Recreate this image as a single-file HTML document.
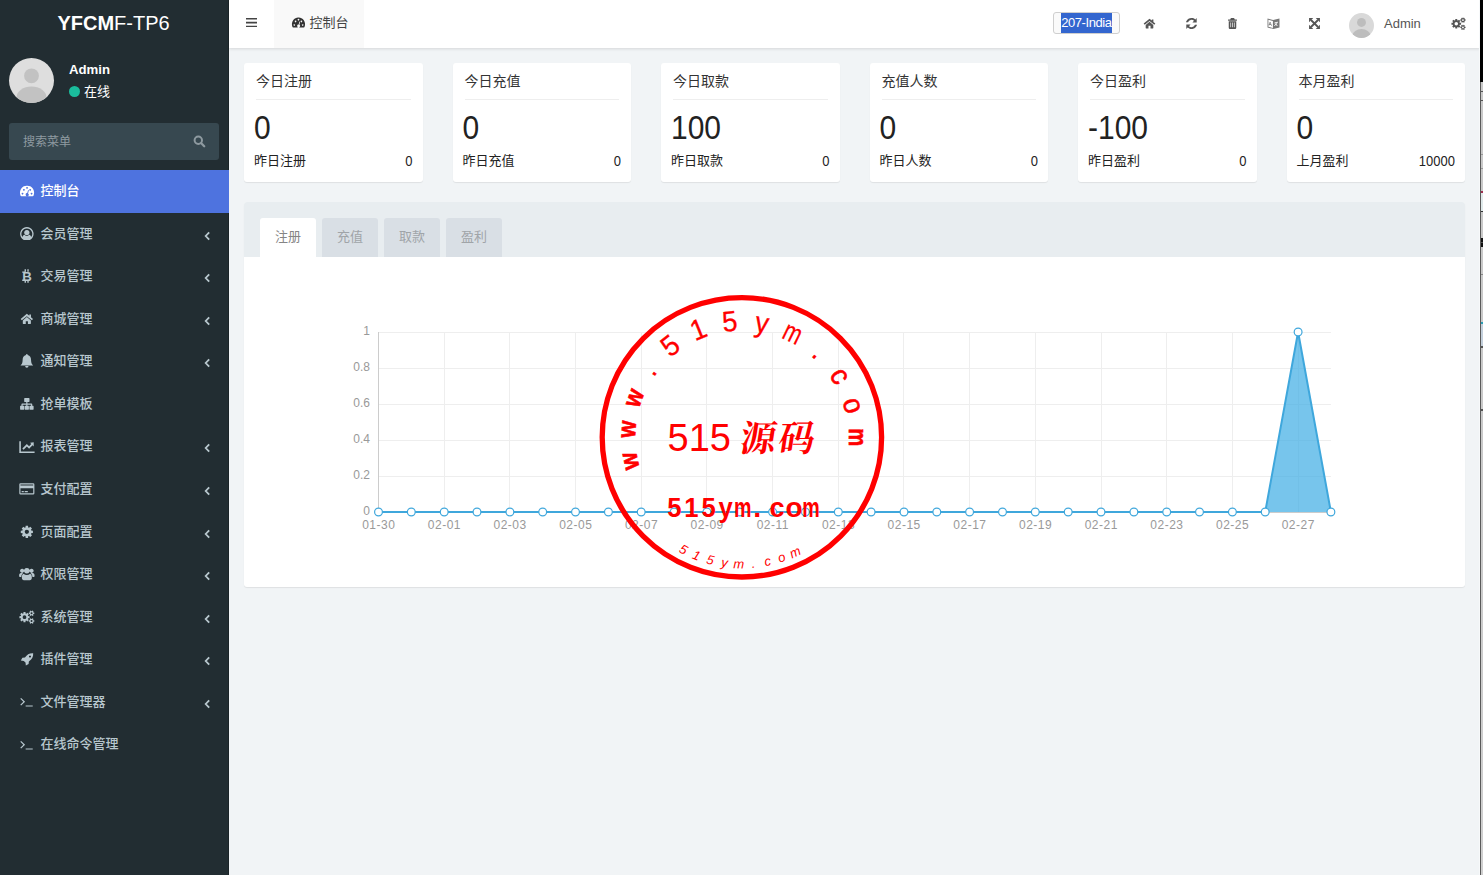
<!DOCTYPE html>
<html lang="zh-CN">
<head>
<meta charset="utf-8">
<title>YFCMF-TP6</title>
<style>
*{box-sizing:border-box;margin:0;padding:0}
html,body{width:1483px;height:875px;overflow:hidden;background:#f1f4f6}
body{position:relative;font-family:"Liberation Sans","Noto Sans CJK SC",sans-serif;font-size:14px;color:#333}
svg{display:block}
.abs{position:absolute}
/* sidebar */
#sidebar{position:absolute;left:0;top:0;width:229px;height:875px;background:#222d32;color:#b8c7ce;box-shadow:inset -1px 0 0 #1b2428}
#logo{position:absolute;left:-1px;top:0;width:229px;height:48px;line-height:46.500px;text-align:center;color:#fff;font-size:20px;letter-spacing:0}
#logo b{font-weight:bold}
#avatar{position:absolute;left:9px;top:58px;width:45px;height:45px;border-radius:50%;background:#dedede;overflow:hidden}
#uname{position:absolute;left:69px;top:60.500px;font-weight:bold;color:#fff;font-size:13.200px;line-height:18px}
#ustat{position:absolute;left:69px;top:82.500px;color:#fff;font-size:13px;line-height:18px}
#ustat i{display:inline-block;width:11px;height:11px;border-radius:50%;background:#1abc9c;margin-right:4px;vertical-align:-1px}
#search{position:absolute;left:9px;top:123px;width:210px;height:37px;border-radius:3px;background:#374850}
#search span{position:absolute;left:14px;top:1px;line-height:37px;font-size:12px;color:#8e9aa0}
#search svg{position:absolute;left:184px;top:12px}
ul.menu{position:absolute;left:0;top:170px;width:229px;list-style:none}
ul.menu li{position:absolute;left:0;width:229px;height:42.57px;line-height:41px;font-weight:500;font-size:13px;color:#b8c7ce}
ul.menu li.active{background:#4e73df;color:#fff}
ul.menu li span{position:absolute;left:40.600px;top:0;white-space:nowrap}
ul.menu li svg.ic{position:absolute;left:19.300px;top:14.100px}
ul.menu li svg.ar{position:absolute;left:204px;top:18px}
/* header */
#header{position:absolute;left:229px;top:0;width:1251px;height:48px;background:#fff;box-shadow:0 1px 3px rgba(0,0,0,.12)}
#tab{position:absolute;left:45px;top:0;width:90px;height:48px;background:#f9f9f9}
#tab span{position:absolute;left:35.500px;top:0;line-height:46px;font-size:13px;color:#444}
/* cards */
.card{position:absolute;top:63px;width:178.500px;height:119px;background:#fff;border-radius:3px;box-shadow:0 1px 1px rgba(0,0,0,.08)}
.card .t{position:absolute;left:12px;top:7.5px;font-size:14px;line-height:20px;color:#333}
.card .hr{position:absolute;left:12px;right:12px;top:36px;height:1px;background:#eee}
.card .n{position:absolute;left:10px;top:46px;font-size:30px;line-height:40px;color:#222;transform:scaleY(1.12);transform-origin:0 32px}
.card .l{position:absolute;left:10px;top:88.100px;font-size:13px;line-height:20px;color:#222}
.card .r{position:absolute;right:10px;top:88.500px;font-size:13px;line-height:20px;color:#222;transform:scaleY(1.12);transform-origin:100% 15px}
/* panel */
#panel{position:absolute;left:244px;top:202px;width:1221px;height:385px;background:#fff;border-radius:3px;box-shadow:0 1px 1px rgba(0,0,0,.08)}
#phead{position:absolute;left:0;top:0;width:1221px;height:55px;background:#e8edf0;border-radius:3px 3px 0 0}
.pt{position:absolute;top:16px;width:56px;height:39px;line-height:37px;text-align:center;font-size:13px;background:#d9dfe5;color:#a0a4a8;border-radius:3px 3px 0 0}
.pt.on{background:#fff;color:#858585}
#sel{position:absolute;left:824.300px;top:12px;width:67px;height:22px;border:1px solid #cfcfcf;border-radius:3px;background:#fafafa}
#sel span{position:absolute;left:6.300px;top:0;height:20px;line-height:20px;font-size:13px;background:#3366cf;color:#fff;white-space:nowrap;letter-spacing:-.45px;padding:0 .5px 0 .7px}
#havatar{position:absolute;left:1120px;top:13px;width:25px;height:25px;border-radius:50%;background:#d9d9d9;overflow:hidden}
#hname{position:absolute;left:1155px;top:0;line-height:47px;font-size:13px;color:#555}
#strip{position:absolute;left:1480px;top:0;width:3px;height:875px;border-left:1px solid #5a5a5a;background:linear-gradient(to bottom,#000 0,#000 82px,#c9c9c9 82px,#c9c9c9 91px,#555 91px,#555 92px,#c9c9c9 92px,#c9c9c9 100px,#555 100px,#555 101px,#c9c9c9 101px,#c9c9c9 154px,#999 154px,#999 155px,#c9c9c9 155px,#c9c9c9 168px,#999 168px,#999 169px,#c9c9c9 169px,#c9c9c9 191px,#a03050 191px,#a03050 193px,#dfe9ea 193px,#dfe9ea 211px,#333 211px,#333 212px,#c9c9c9 212px,#c9c9c9 238px,#111 238px,#111 242px,#999 242px,#111 243px,#111 247px,#c9c9c9 247px,#c9c9c9 274px,#888 274px,#888 275px,#c9c9c9 275px,#c9c9c9 322px,#2a9db5 322px,#2a9db5 324px,#c3cfdb 324px,#c3cfdb 346px,#555 346px,#555 348px,#c9c9c9 348px,#c9c9c9 409px,#555 409px,#555 411px,#c9c9c9 411px,#cfcfcf 100%)}
#strip:before{content:"";position:absolute;left:-1px;top:0;width:1px;height:82px;background:#000}
#stripw{position:absolute;left:1479px;top:0;width:1px;height:875px;background:#f7f9fa}
</style>
</head>
<body>
<div id="sidebar">
  <div id="logo"><b>YFCM</b>F-TP6</div>
  <div id="avatar"><svg width="45" height="45" viewBox="0 0 45 45"><circle cx="22.5" cy="17.800" r="7.400" fill="#c2c2c2"/><ellipse cx="22.5" cy="39.500" rx="15" ry="11" fill="#c2c2c2"/></svg></div>
  <div id="uname">Admin</div>
  <div id="ustat"><i></i>在线</div>
  <div id="search"><span>搜索菜单</span><svg width="13" height="13" viewBox="0 0 13 13"><circle cx="5.3" cy="5.300" r="3.700" fill="none" stroke="#8e9aa0" stroke-width="2"/><path d="M8.300 8.300l2.900 2.900" stroke="#8e9aa0" stroke-width="2.300" stroke-linecap="round"/></svg></div>
  <ul class="menu">
<li class="active" style="top:0.00px"><svg class="ic" style="" width="15.7" height="13.74" viewBox="0 0 16 14" fill="currentColor"><g transform="translate(8.200 7) scale(.94 1) translate(-8 -7)"><path fill-rule="evenodd" d="M.8 11.4A7.200 7.200 0 0 1 8 1.700a7.200 7.200 0 0 1 7.200 9.700q-.2 1.100-1.100 1.100H1.900q-.9 0-1.100-1.100zM3.100 8.900a.9.9 0 1 0 .01 0zM4.600 5a.9.9 0 1 0 .01 0zM8 3.100a.9.9 0 1 0 .01 0zM11.400 5a.9.9 0 1 0 .01 0zM12.900 8.900a.9.9 0 1 0 .01 0zM9.200 6l-1 3.300a1.600 1.600 0 1 0 .9.3l.9-3.300z"/></g></svg><span>控制台</span></li>
<li style="top:42.57px"><svg class="ic" style="" width="15.7" height="13.74" viewBox="0 0 16 14" fill="currentColor"><path fill-rule="evenodd" d="M8 .1a6.900 6.900 0 1 0 .01 0zM8 1.500a5.500 5.500 0 0 1 4.400 8.800c-.3-1.400-.9-2.400-2.100-2.500a3.100 3.100 0 0 1-4.600 0c-1.200.1-1.800 1.100-2.100 2.500A5.500 5.500 0 0 1 8 1.500zM8 3a2.700 2.700 0 1 0 .01 0z"/></svg><span>会员管理</span><svg class="ar" width="7" height="10" viewBox="0 0 7 10"><path d="M5.200 1.300L1.700 5l3.500 3.700" fill="none" stroke="currentColor" stroke-width="1.800"/></svg></li>
<li style="top:85.14px"><svg class="ic" style="" width="15.7" height="13.74" viewBox="0 0 16 14" fill="currentColor"><text x="8.300" y="12.200" text-anchor="middle" font-family="Liberation Sans,sans-serif" font-weight="bold" font-size="13.500">B</text><path d="M5.700 0.200h1.400v2.600h-1.400zM8.500 .2h1.400v2.600h-1.400zM5.700 11.600h1.400v2.400h-1.400zM8.500 11.600h1.400v2.400h-1.400zM3.300 2.500h3v1.400h-3zM3.300 10.800h3v1.400h-3z"/></svg><span>交易管理</span><svg class="ar" width="7" height="10" viewBox="0 0 7 10"><path d="M5.200 1.300L1.700 5l3.500 3.700" fill="none" stroke="currentColor" stroke-width="1.800"/></svg></li>
<li style="top:127.71px"><svg class="ic" style="" width="15.7" height="13.74" viewBox="0 0 16 14" fill="currentColor"><g transform="translate(8 7.400) scale(.84) translate(-8 -7.400)"><path d="M8 .7L.5 7l1.400 1.600L8 3.600l6.100 5L15.500 7l-2.500-2.100V1.700h-2v1.500zM8 4.800L3.100 8.800v3.900q0 .6.600.6h3V9.700h2.600v3.600h3q.6 0 .6-.6V8.800z"/></g></svg><span>商城管理</span><svg class="ar" width="7" height="10" viewBox="0 0 7 10"><path d="M5.200 1.300L1.700 5l3.500 3.700" fill="none" stroke="currentColor" stroke-width="1.800"/></svg></li>
<li style="top:170.28px"><svg class="ic" style="" width="15.7" height="13.74" viewBox="0 0 16 14" fill="currentColor"><g transform="translate(8 0) scale(.9 1) translate(-8 0)"><path d="M8 .1q.9 0 1 1c2.600.6 3.800 2.600 3.800 5.200 0 2.600.9 4.200 2.400 5.400H.8c1.500-1.200 2.400-2.800 2.400-5.400 0-2.600 1.200-4.600 3.800-5.200q.1-1 1-1zM6.100 12.300h3.800a1.900 1.700 0 0 1-3.800 0z"/></g></svg><span>通知管理</span><svg class="ar" width="7" height="10" viewBox="0 0 7 10"><path d="M5.200 1.300L1.700 5l3.500 3.700" fill="none" stroke="currentColor" stroke-width="1.800"/></svg></li>
<li style="top:212.85px"><svg class="ic" style="" width="15.7" height="13.74" viewBox="0 0 16 14" fill="currentColor"><path d="M5.800 1h4.400q.5 0 .5.500v3q0 .5-.5.500H8.600v1.600h4.100q.8 0 .8.800V9h.9q.5 0 .5.500v3q0 .5-.5.500h-3.300q-.5 0-.5-.5v-3q0-.5.500-.5h1.200V7.800H8.600V9h1q.5 0 .5.500v3q0 .5-.5.500H6.400q-.5 0-.5-.5v-3q0-.5.500-.5h1V7.800H3.700V9h1.200q.5 0 .5.500v3q0 .5-.5.500H1.600q-.5 0-.5-.5v-3q0-.5.500-.5h.9V7.400q0-.8.800-.8h4.100V5H5.800q-.5 0-.5-.5v-3q0-.5.500-.5z"/></svg><span>抢单模板</span></li>
<li style="top:255.42px"><svg class="ic" style="" width="15.7" height="13.74" viewBox="0 0 16 14" fill="currentColor"><path d="M.3 1.300h1.600v10.300h14v1.600H.3zM15 2.400v4.200l-1.200-1.200-3.500 3.500-2.300-2.300-3.300 3.300-1.300-1.300 4.600-4.600 2.300 2.300 2.200-2.200-1.200-1.200z"/></svg><span>报表管理</span><svg class="ar" width="7" height="10" viewBox="0 0 7 10"><path d="M5.200 1.300L1.700 5l3.500 3.700" fill="none" stroke="currentColor" stroke-width="1.800"/></svg></li>
<li style="top:297.99px"><svg class="ic" style="" width="15.7" height="13.74" viewBox="0 0 16 14" fill="currentColor"><path fill-rule="evenodd" d="M1.600 1.300h12.800q1.300 0 1.300 1.300v8.800q0 1.300-1.300 1.300H1.600Q.3 12.700.3 11.400V2.600q0-1.300 1.300-1.300zM1.500 2.500v1h13v-1zM1.500 6.300v5.200h13V6.300zM2.700 9.300h2.200v1.100H2.700zM5.800 9.300h3.200v1.100H5.800z"/></svg><span>支付配置</span><svg class="ar" width="7" height="10" viewBox="0 0 7 10"><path d="M5.200 1.300L1.700 5l3.500 3.700" fill="none" stroke="currentColor" stroke-width="1.800"/></svg></li>
<li style="top:340.56px"><svg class="ic" style="" width="15.7" height="13.74" viewBox="0 0 16 14" fill="currentColor"><path fill-rule="evenodd" d="M14.18 5.77 L14.18 8.23 L12.50 8.35 L12.14 9.23 L13.24 10.50 L11.50 12.24 L10.23 11.14 L9.35 11.50 L9.23 13.18 L6.77 13.18 L6.65 11.50 L5.77 11.14 L4.50 12.24 L2.76 10.50 L3.86 9.23 L3.50 8.35 L1.82 8.23 L1.82 5.77 L3.50 5.65 L3.86 4.77 L2.76 3.50 L4.50 1.76 L5.77 2.86 L6.65 2.50 L6.77 0.82 L9.23 0.82 L9.35 2.50 L10.23 2.86 L11.50 1.76 L13.24 3.50 L12.14 4.77 L12.50 5.65Z M5.80 7.00 a2.20 2.20 0 1 0 4.40 0 a2.20 2.20 0 1 0 -4.40 0Z"/></svg><span>页面配置</span><svg class="ar" width="7" height="10" viewBox="0 0 7 10"><path d="M5.200 1.300L1.700 5l3.500 3.700" fill="none" stroke="currentColor" stroke-width="1.800"/></svg></li>
<li style="top:383.13px"><svg class="ic" style="" width="15.7" height="13.74" viewBox="0 0 16 14" fill="currentColor"><path d="M8 .9a2.900 2.900 0 1 0 .01 0zM3.200 1.800a2.100 2.100 0 1 0 .01 0zM12.800 1.800a2.100 2.100 0 1 0 .01 0zM4.700 6.900C3.500 7.200 2.900 8.500 2.900 10.600c0 1.800.8 2.800 2.100 2.800h6c1.300 0 2.100-1 2.100-2.800 0-2.100-.6-3.400-1.800-3.700a4.700 4.700 0 0 1-6.600 0zM4.100 6.300C3.500 6.200 2.800 6.100 2.100 6.100.8 6.100.1 7.100.1 8.800c0 1 .5 1.500 1.400 1.500h.8c0-1.700.6-3.200 1.800-4zM11.900 6.300c.6-.1 1.300-.2 2-.2 1.300 0 2 1 2 2.700 0 1-.5 1.500-1.400 1.500h-.8c0-1.700-.6-3.200-1.800-4z"/></svg><span>权限管理</span><svg class="ar" width="7" height="10" viewBox="0 0 7 10"><path d="M5.200 1.300L1.700 5l3.500 3.700" fill="none" stroke="currentColor" stroke-width="1.800"/></svg></li>
<li style="top:425.70px"><svg class="ic" style="" width="15.7" height="13.74" viewBox="0 0 16 14" fill="currentColor"><path fill-rule="evenodd" d="M10.80 6.27 L10.80 8.33 L9.34 8.42 L9.03 9.15 L10.01 10.24 L8.54 11.71 L7.45 10.73 L6.72 11.04 L6.63 12.50 L4.57 12.50 L4.48 11.04 L3.75 10.73 L2.66 11.71 L1.19 10.24 L2.17 9.15 L1.86 8.42 L0.40 8.33 L0.40 6.27 L1.86 6.18 L2.17 5.45 L1.19 4.36 L2.66 2.89 L3.75 3.87 L4.48 3.56 L4.57 2.10 L6.63 2.10 L6.72 3.56 L7.45 3.87 L8.54 2.89 L10.01 4.36 L9.03 5.45 L9.34 6.18Z M3.70 7.30 a1.90 1.90 0 1 0 3.80 0 a1.90 1.90 0 1 0 -3.80 0Z M15.60 2.55 L15.60 4.05 L14.65 4.06 L14.38 4.53 L14.85 5.35 L13.55 6.10 L13.07 5.28 L12.53 5.28 L12.05 6.10 L10.75 5.35 L11.22 4.53 L10.95 4.06 L10.00 4.05 L10.00 2.55 L10.95 2.54 L11.22 2.07 L10.75 1.25 L12.05 0.50 L12.53 1.32 L13.07 1.32 L13.55 0.50 L14.85 1.25 L14.38 2.07 L14.65 2.54Z M11.80 3.30 a1.00 1.00 0 1 0 2.00 0 a1.00 1.00 0 1 0 -2.00 0Z M15.60 10.45 L15.60 11.95 L14.65 11.96 L14.38 12.43 L14.85 13.25 L13.55 14.00 L13.07 13.18 L12.53 13.18 L12.05 14.00 L10.75 13.25 L11.22 12.43 L10.95 11.96 L10.00 11.95 L10.00 10.45 L10.95 10.44 L11.22 9.97 L10.75 9.15 L12.05 8.40 L12.53 9.22 L13.07 9.22 L13.55 8.40 L14.85 9.15 L14.38 9.97 L14.65 10.44Z M11.80 11.20 a1.00 1.00 0 1 0 2.00 0 a1.00 1.00 0 1 0 -2.00 0Z"/></svg><span>系统管理</span><svg class="ar" width="7" height="10" viewBox="0 0 7 10"><path d="M5.200 1.300L1.700 5l3.500 3.700" fill="none" stroke="currentColor" stroke-width="1.800"/></svg></li>
<li style="top:468.27px"><svg class="ic" style="" width="15.7" height="13.74" viewBox="0 0 16 14" fill="currentColor"><g transform="translate(8.300 7.200) scale(.88) translate(-8 -7.500)"><path fill-rule="evenodd" d="M15 .8c.3 4.200-1.500 7-5 9.400l-.3 3-3.200 1.800-.4-3.400-2-2L.7 9.200 2.500 6l3-.3C7.900 2.200 10.800.5 15 .8zM11.300 3.300a1.200 1.200 0 1 0 .01 0z"/></g></svg><span>插件管理</span><svg class="ar" width="7" height="10" viewBox="0 0 7 10"><path d="M5.200 1.300L1.700 5l3.500 3.700" fill="none" stroke="currentColor" stroke-width="1.800"/></svg></li>
<li style="top:510.84px"><svg class="ic" style="" width="15.7" height="13.74" viewBox="0 0 16 14" fill="currentColor"><path d="M2.200 3l4 3.900-4 3.900-.9-.9 3.100-3L1.300 3.900zM6.800 10.600h7.200v1.100H6.800z"/></svg><span>文件管理器</span><svg class="ar" width="7" height="10" viewBox="0 0 7 10"><path d="M5.200 1.300L1.700 5l3.500 3.700" fill="none" stroke="currentColor" stroke-width="1.800"/></svg></li>
<li style="top:553.41px"><svg class="ic" style="" width="15.7" height="13.74" viewBox="0 0 16 14" fill="currentColor"><path d="M2.200 3l4 3.900-4 3.900-.9-.9 3.100-3L1.300 3.900zM6.800 10.600h7.200v1.100H6.800z"/></svg><span>在线命令管理</span></li>
</ul>
</div>
<div id="header">
  <svg class="abs" style="left:17px;top:17.700px" width="11" height="9.300" viewBox="0 0 11 9.300"><path d="M0 0h11v1.600H0zM0 3.850h11v1.600H0zM0 7.700h11v1.600H0z" fill="#444"/></svg>
  <div id="tab"><svg class="abs" style="left:16.500px;top:16.300px;color:#333" width="14.6" height="12.8" viewBox="0 0 16 14" fill="currentColor"><g transform="translate(8.200 7) scale(.94 1) translate(-8 -7)"><path fill-rule="evenodd" d="M.8 11.4A7.200 7.200 0 0 1 8 1.700a7.200 7.200 0 0 1 7.200 9.700q-.2 1.100-1.100 1.100H1.900q-.9 0-1.100-1.100zM3.100 8.900a.9.9 0 1 0 .01 0zM4.600 5a.9.9 0 1 0 .01 0zM8 3.100a.9.9 0 1 0 .01 0zM11.400 5a.9.9 0 1 0 .01 0zM12.900 8.900a.9.9 0 1 0 .01 0zM9.200 6l-1 3.300a1.600 1.600 0 1 0 .9.3l.9-3.300z"/></g></svg><span>控制台</span></div>
  <div id="sel"><span>207-India</span></div>
  <svg class="abs" style="left:912.5px;top:17px;color:#555" width="15" height="13" viewBox="0 0 16 14" fill="currentColor"><g transform="translate(8 7.400) scale(.84) translate(-8 -7.400)"><path d="M8 .7L.5 7l1.400 1.600L8 3.600l6.100 5L15.500 7l-2.500-2.100V1.700h-2v1.500zM8 4.800L3.100 8.800v3.900q0 .6.600.6h3V9.700h2.600v3.600h3q.6 0 .6-.6V8.800z"/></g></svg><svg class="abs" style="left:954.5px;top:17px;color:#555" width="15" height="13" viewBox="0 0 16 14" fill="currentColor"><path d="M13.600 1.200v4.600H9l1.700-1.700A3.900 3.900 0 0 0 4.300 5.600H2A6.100 6.100 0 0 1 12.100 2.700zM2.400 12.800V8.200H7L5.300 9.900a3.900 3.900 0 0 0 6.400-1.500H14A6.100 6.100 0 0 1 3.900 11.300z"/></svg><svg class="abs" style="left:995.5px;top:17px;color:#555" width="15" height="13" viewBox="0 0 16 14" fill="currentColor"><g transform="translate(8 7) scale(.9) translate(-8 -7)"><path fill-rule="evenodd" d="M5.600 1.300q.3-.8 1-.8h2.800q.7 0 1 .8l.3.900h2.600v1.400H2.700V2.200h2.600zM3.500 4.200h9v8q0 1.400-1.300 1.400H4.800q-1.300 0-1.300-1.400zM5.500 5.800v5.800h.8V5.800zM7.600 5.800v5.800h.8V5.800zM9.700 5.800v5.800h.8V5.800z"/></g></svg><svg class="abs" style="left:1036.5px;top:17px;color:#555" width="15" height="13" viewBox="0 0 16 14" fill="currentColor"><g transform="translate(8 7) scale(.92) translate(-8 -7)" opacity=".8"><path fill-rule="evenodd" d="M1 1.200l6.500 1.600 7.500-1.600v10.600L8 13.500 1 11.600zM2 2.600v8.200l5.300 1.400V4zM3.600 5.200l.9-.1 1.700 4.700-.9-.2-.3-.9-1.700-.3-.3.800-.8-.2zM4 6.100l-.5 1.500 1.100.2zM9.300 5.500l3.900-.5v.8l-.5.100c-.2.900-.6 1.600-1.200 2.200l1.300 1-.5.700-1.500-1.100c-.6.500-1.300.8-2 1l-.3-.8c.6-.1 1.200-.4 1.700-.8-.5-.5-.8-1-1-1.600l.8-.2c.2.500.4.900.8 1.200.5-.5.800-1 .9-1.500l-2.400.3z"/></g></svg><svg class="abs" style="left:1077.5px;top:17px;color:#555" width="15" height="13" viewBox="0 0 16 14" fill="currentColor"><g transform="translate(8 7) scale(.9) translate(-8 -7)"><path d="M1.500 .5h5L1.500 5.500zM14.500 .5v5L9.500 .5zM14.500 13.500h-5l5-5zM1.500 13.500v-5l5 5z"/><path d="M3.800 2.800l8.400 8.400M12.200 2.800L3.800 11.200" stroke="currentColor" stroke-width="2.200" fill="none"/></g></svg><svg class="abs" style="left:1221.5px;top:17px;color:#555" width="15" height="13" viewBox="0 0 16 14" fill="currentColor"><path fill-rule="evenodd" d="M10.80 6.27 L10.80 8.33 L9.34 8.42 L9.03 9.15 L10.01 10.24 L8.54 11.71 L7.45 10.73 L6.72 11.04 L6.63 12.50 L4.57 12.50 L4.48 11.04 L3.75 10.73 L2.66 11.71 L1.19 10.24 L2.17 9.15 L1.86 8.42 L0.40 8.33 L0.40 6.27 L1.86 6.18 L2.17 5.45 L1.19 4.36 L2.66 2.89 L3.75 3.87 L4.48 3.56 L4.57 2.10 L6.63 2.10 L6.72 3.56 L7.45 3.87 L8.54 2.89 L10.01 4.36 L9.03 5.45 L9.34 6.18Z M3.70 7.30 a1.90 1.90 0 1 0 3.80 0 a1.90 1.90 0 1 0 -3.80 0Z M15.60 2.55 L15.60 4.05 L14.65 4.06 L14.38 4.53 L14.85 5.35 L13.55 6.10 L13.07 5.28 L12.53 5.28 L12.05 6.10 L10.75 5.35 L11.22 4.53 L10.95 4.06 L10.00 4.05 L10.00 2.55 L10.95 2.54 L11.22 2.07 L10.75 1.25 L12.05 0.50 L12.53 1.32 L13.07 1.32 L13.55 0.50 L14.85 1.25 L14.38 2.07 L14.65 2.54Z M11.80 3.30 a1.00 1.00 0 1 0 2.00 0 a1.00 1.00 0 1 0 -2.00 0Z M15.60 10.45 L15.60 11.95 L14.65 11.96 L14.38 12.43 L14.85 13.25 L13.55 14.00 L13.07 13.18 L12.53 13.18 L12.05 14.00 L10.75 13.25 L11.22 12.43 L10.95 11.96 L10.00 11.95 L10.00 10.45 L10.95 10.44 L11.22 9.97 L10.75 9.15 L12.05 8.40 L12.53 9.22 L13.07 9.22 L13.55 8.40 L14.85 9.15 L14.38 9.97 L14.65 10.44Z M11.80 11.20 a1.00 1.00 0 1 0 2.00 0 a1.00 1.00 0 1 0 -2.00 0Z"/></svg>
  <div id="havatar"><svg width="25" height="25" viewBox="0 0 45 45"><circle cx="22.5" cy="17" r="8" fill="#bdbdbd"/><ellipse cx="22.5" cy="40" rx="16" ry="11" fill="#bdbdbd"/></svg></div>
  <div id="hname">Admin</div>
</div>
<div class="card" style="left:244.0px"><div class="t">今日注册</div><div class="hr"></div><div class="n">0</div><div class="l">昨日注册</div><div class="r">0</div></div>
<div class="card" style="left:452.5px"><div class="t">今日充值</div><div class="hr"></div><div class="n">0</div><div class="l">昨日充值</div><div class="r">0</div></div>
<div class="card" style="left:661.0px"><div class="t">今日取款</div><div class="hr"></div><div class="n">100</div><div class="l">昨日取款</div><div class="r">0</div></div>
<div class="card" style="left:869.5px"><div class="t">充值人数</div><div class="hr"></div><div class="n">0</div><div class="l">昨日人数</div><div class="r">0</div></div>
<div class="card" style="left:1078.0px"><div class="t">今日盈利</div><div class="hr"></div><div class="n">-100</div><div class="l">昨日盈利</div><div class="r">0</div></div>
<div class="card" style="left:1286.5px"><div class="t">本月盈利</div><div class="hr"></div><div class="n">0</div><div class="l">上月盈利</div><div class="r">10000</div></div>

<div id="panel">
  <div id="phead">
    <div class="pt on" style="left:16px">注册</div>
    <div class="pt" style="left:78px">充值</div>
    <div class="pt" style="left:140px">取款</div>
    <div class="pt" style="left:202px">盈利</div>
  </div>
</div>
<svg id="chart" class="abs" style="left:0;top:0" width="1483" height="875" viewBox="0 0 1483 875">
<line x1="378.5" y1="476.5" x2="1330.9" y2="476.5" stroke="#eeeeee" stroke-width="1"/><line x1="378.5" y1="440.5" x2="1330.9" y2="440.5" stroke="#eeeeee" stroke-width="1"/><line x1="378.5" y1="404.5" x2="1330.9" y2="404.5" stroke="#eeeeee" stroke-width="1"/><line x1="378.5" y1="368.5" x2="1330.9" y2="368.5" stroke="#eeeeee" stroke-width="1"/><line x1="378.5" y1="332.5" x2="1330.9" y2="332.5" stroke="#eeeeee" stroke-width="1"/><line x1="444.5" y1="332.0" x2="444.5" y2="512.0" stroke="#eeeeee" stroke-width="1"/><line x1="509.5" y1="332.0" x2="509.5" y2="512.0" stroke="#eeeeee" stroke-width="1"/><line x1="575.5" y1="332.0" x2="575.5" y2="512.0" stroke="#eeeeee" stroke-width="1"/><line x1="641.5" y1="332.0" x2="641.5" y2="512.0" stroke="#eeeeee" stroke-width="1"/><line x1="706.5" y1="332.0" x2="706.5" y2="512.0" stroke="#eeeeee" stroke-width="1"/><line x1="772.5" y1="332.0" x2="772.5" y2="512.0" stroke="#eeeeee" stroke-width="1"/><line x1="838.5" y1="332.0" x2="838.5" y2="512.0" stroke="#eeeeee" stroke-width="1"/><line x1="903.5" y1="332.0" x2="903.5" y2="512.0" stroke="#eeeeee" stroke-width="1"/><line x1="969.5" y1="332.0" x2="969.5" y2="512.0" stroke="#eeeeee" stroke-width="1"/><line x1="1035.5" y1="332.0" x2="1035.5" y2="512.0" stroke="#eeeeee" stroke-width="1"/><line x1="1101.5" y1="332.0" x2="1101.5" y2="512.0" stroke="#eeeeee" stroke-width="1"/><line x1="1166.5" y1="332.0" x2="1166.5" y2="512.0" stroke="#eeeeee" stroke-width="1"/><line x1="1232.5" y1="332.0" x2="1232.5" y2="512.0" stroke="#eeeeee" stroke-width="1"/><line x1="1298.5" y1="332.0" x2="1298.5" y2="512.0" stroke="#eeeeee" stroke-width="1"/><line x1="378.5" y1="332.0" x2="378.5" y2="512.5" stroke="#cccccc" stroke-width="1"/><line x1="378.5" y1="512.5" x2="1330.9" y2="512.5" stroke="#cccccc" stroke-width="1"/><text x="370.0" y="515.2" text-anchor="end" font-size="12" fill="#999">0</text><text x="370.0" y="479.2" text-anchor="end" font-size="12" fill="#999">0.2</text><text x="370.0" y="443.2" text-anchor="end" font-size="12" fill="#999">0.4</text><text x="370.0" y="407.2" text-anchor="end" font-size="12" fill="#999">0.6</text><text x="370.0" y="371.2" text-anchor="end" font-size="12" fill="#999">0.8</text><text x="370.0" y="335.2" text-anchor="end" font-size="12" fill="#999">1</text><text x="378.8" y="529.0" text-anchor="middle" font-size="12" letter-spacing=".5" fill="#999">01-30</text><text x="444.4" y="529.0" text-anchor="middle" font-size="12" letter-spacing=".5" fill="#999">02-01</text><text x="510.1" y="529.0" text-anchor="middle" font-size="12" letter-spacing=".5" fill="#999">02-03</text><text x="575.8" y="529.0" text-anchor="middle" font-size="12" letter-spacing=".5" fill="#999">02-05</text><text x="641.5" y="529.0" text-anchor="middle" font-size="12" letter-spacing=".5" fill="#999">02-07</text><text x="707.2" y="529.0" text-anchor="middle" font-size="12" letter-spacing=".5" fill="#999">02-09</text><text x="772.8" y="529.0" text-anchor="middle" font-size="12" letter-spacing=".5" fill="#999">02-11</text><text x="838.5" y="529.0" text-anchor="middle" font-size="12" letter-spacing=".5" fill="#999">02-13</text><text x="904.2" y="529.0" text-anchor="middle" font-size="12" letter-spacing=".5" fill="#999">02-15</text><text x="969.9" y="529.0" text-anchor="middle" font-size="12" letter-spacing=".5" fill="#999">02-17</text><text x="1035.6" y="529.0" text-anchor="middle" font-size="12" letter-spacing=".5" fill="#999">02-19</text><text x="1101.3" y="529.0" text-anchor="middle" font-size="12" letter-spacing=".5" fill="#999">02-21</text><text x="1166.9" y="529.0" text-anchor="middle" font-size="12" letter-spacing=".5" fill="#999">02-23</text><text x="1232.6" y="529.0" text-anchor="middle" font-size="12" letter-spacing=".5" fill="#999">02-25</text><text x="1298.3" y="529.0" text-anchor="middle" font-size="12" letter-spacing=".5" fill="#999">02-27</text>
<polygon points="378.5,512.0 411.3,512.0 444.2,512.0 477.0,512.0 509.9,512.0 542.7,512.0 575.5,512.0 608.4,512.0 641.2,512.0 674.1,512.0 706.9,512.0 739.8,512.0 772.6,512.0 805.4,512.0 838.3,512.0 871.1,512.0 904.0,512.0 936.8,512.0 969.6,512.0 1002.5,512.0 1035.3,512.0 1068.2,512.0 1101.0,512.0 1133.9,512.0 1166.7,512.0 1199.5,512.0 1232.4,512.0 1265.2,512.0 1298.1,332.0 1330.9,512.0 1330.9,512.0 378.5,512.0" fill="#3dade4" fill-opacity="0.7"/><polyline points="378.5,512.0 411.3,512.0 444.2,512.0 477.0,512.0 509.9,512.0 542.7,512.0 575.5,512.0 608.4,512.0 641.2,512.0 674.1,512.0 706.9,512.0 739.8,512.0 772.6,512.0 805.4,512.0 838.3,512.0 871.1,512.0 904.0,512.0 936.8,512.0 969.6,512.0 1002.5,512.0 1035.3,512.0 1068.2,512.0 1101.0,512.0 1133.9,512.0 1166.7,512.0 1199.5,512.0 1232.4,512.0 1265.2,512.0 1298.1,332.0 1330.9,512.0" fill="none" stroke="#3fa7dc" stroke-width="2" stroke-linejoin="round"/><circle cx="378.5" cy="512.0" r="3.900" fill="#fff" stroke="#3fa7dc" stroke-width="1.200"/><circle cx="411.3" cy="512.0" r="3.900" fill="#fff" stroke="#3fa7dc" stroke-width="1.200"/><circle cx="444.2" cy="512.0" r="3.900" fill="#fff" stroke="#3fa7dc" stroke-width="1.200"/><circle cx="477.0" cy="512.0" r="3.900" fill="#fff" stroke="#3fa7dc" stroke-width="1.200"/><circle cx="509.9" cy="512.0" r="3.900" fill="#fff" stroke="#3fa7dc" stroke-width="1.200"/><circle cx="542.7" cy="512.0" r="3.900" fill="#fff" stroke="#3fa7dc" stroke-width="1.200"/><circle cx="575.5" cy="512.0" r="3.900" fill="#fff" stroke="#3fa7dc" stroke-width="1.200"/><circle cx="608.4" cy="512.0" r="3.900" fill="#fff" stroke="#3fa7dc" stroke-width="1.200"/><circle cx="641.2" cy="512.0" r="3.900" fill="#fff" stroke="#3fa7dc" stroke-width="1.200"/><circle cx="674.1" cy="512.0" r="3.900" fill="#fff" stroke="#3fa7dc" stroke-width="1.200"/><circle cx="706.9" cy="512.0" r="3.900" fill="#fff" stroke="#3fa7dc" stroke-width="1.200"/><circle cx="739.8" cy="512.0" r="3.900" fill="#fff" stroke="#3fa7dc" stroke-width="1.200"/><circle cx="772.6" cy="512.0" r="3.900" fill="#fff" stroke="#3fa7dc" stroke-width="1.200"/><circle cx="805.4" cy="512.0" r="3.900" fill="#fff" stroke="#3fa7dc" stroke-width="1.200"/><circle cx="838.3" cy="512.0" r="3.900" fill="#fff" stroke="#3fa7dc" stroke-width="1.200"/><circle cx="871.1" cy="512.0" r="3.900" fill="#fff" stroke="#3fa7dc" stroke-width="1.200"/><circle cx="904.0" cy="512.0" r="3.900" fill="#fff" stroke="#3fa7dc" stroke-width="1.200"/><circle cx="936.8" cy="512.0" r="3.900" fill="#fff" stroke="#3fa7dc" stroke-width="1.200"/><circle cx="969.6" cy="512.0" r="3.900" fill="#fff" stroke="#3fa7dc" stroke-width="1.200"/><circle cx="1002.5" cy="512.0" r="3.900" fill="#fff" stroke="#3fa7dc" stroke-width="1.200"/><circle cx="1035.3" cy="512.0" r="3.900" fill="#fff" stroke="#3fa7dc" stroke-width="1.200"/><circle cx="1068.2" cy="512.0" r="3.900" fill="#fff" stroke="#3fa7dc" stroke-width="1.200"/><circle cx="1101.0" cy="512.0" r="3.900" fill="#fff" stroke="#3fa7dc" stroke-width="1.200"/><circle cx="1133.9" cy="512.0" r="3.900" fill="#fff" stroke="#3fa7dc" stroke-width="1.200"/><circle cx="1166.7" cy="512.0" r="3.900" fill="#fff" stroke="#3fa7dc" stroke-width="1.200"/><circle cx="1199.5" cy="512.0" r="3.900" fill="#fff" stroke="#3fa7dc" stroke-width="1.200"/><circle cx="1232.4" cy="512.0" r="3.900" fill="#fff" stroke="#3fa7dc" stroke-width="1.200"/><circle cx="1265.2" cy="512.0" r="3.900" fill="#fff" stroke="#3fa7dc" stroke-width="1.200"/><circle cx="1298.1" cy="332.0" r="3.900" fill="#fff" stroke="#3fa7dc" stroke-width="1.200"/><circle cx="1330.9" cy="512.0" r="3.900" fill="#fff" stroke="#3fa7dc" stroke-width="1.200"/>
</svg>
<svg id="stamp" class="abs" style="left:0;top:0" width="1483" height="875" viewBox="0 0 1483 875" fill="#ff0000" font-family="Liberation Sans,sans-serif">
<circle cx="741.9" cy="437.3" r="139.7" fill="none" stroke="#ff0000" stroke-width="5.300"/><text transform="translate(741.9 437.3) rotate(-102.0) translate(0 -106.6) scale(0.76 0.90)" text-anchor="middle" font-size="28.800" font-weight="bold" stroke="#ff0000" stroke-width=".7">w</text><text transform="translate(741.9 437.3) rotate(-86.0) translate(0 -106.6) scale(0.76 0.90)" text-anchor="middle" font-size="28.800" font-weight="bold" stroke="#ff0000" stroke-width=".7">w</text><text transform="translate(741.9 437.3) rotate(-70.0) translate(0 -106.6) scale(0.76 0.90)" text-anchor="middle" font-size="28.800" font-weight="bold" stroke="#ff0000" stroke-width=".7">w</text><text transform="translate(741.9 437.3) rotate(-54.0) translate(0 -106.6) scale(0.94 1.00)" text-anchor="middle" font-size="28.800" stroke="#ff0000" stroke-width=".3">.</text><text transform="translate(741.9 437.3) rotate(-38.0) translate(0 -106.6) scale(0.94 1.00)" text-anchor="middle" font-size="28.800" stroke="#ff0000" stroke-width=".3">5</text><text transform="translate(741.9 437.3) rotate(-22.0) translate(0 -106.6) scale(0.94 1.00)" text-anchor="middle" font-size="28.800" stroke="#ff0000" stroke-width=".3">1</text><text transform="translate(741.9 437.3) rotate(-6.0) translate(0 -106.6) scale(0.94 1.00)" text-anchor="middle" font-size="28.800" stroke="#ff0000" stroke-width=".3">5</text><text transform="translate(741.9 437.3) rotate(10.0) translate(0 -106.6) scale(0.94 1.00)" text-anchor="middle" font-size="28.800" stroke="#ff0000" stroke-width=".3">y</text><text transform="translate(741.9 437.3) rotate(26.0) translate(0 -106.6) scale(0.74 1.00)" text-anchor="middle" font-size="28.800" stroke="#ff0000" stroke-width=".3">m</text><text transform="translate(741.9 437.3) rotate(42.0) translate(0 -106.6) scale(0.94 1.00)" text-anchor="middle" font-size="28.800" stroke="#ff0000" stroke-width=".3">.</text><text transform="translate(741.9 437.3) rotate(58.0) translate(0 -106.6) scale(0.94 1.00)" text-anchor="middle" font-size="28.800" stroke="#ff0000" stroke-width=".6">c</text><text transform="translate(741.9 437.3) rotate(74.0) translate(0 -106.6) scale(0.94 1.00)" text-anchor="middle" font-size="28.800" stroke="#ff0000" stroke-width=".6">o</text><text transform="translate(741.9 437.3) rotate(90.0) translate(0 -106.6) scale(0.70 0.92)" text-anchor="middle" font-size="28.800" font-weight="bold" stroke="#ff0000" stroke-width=".7">m</text><text transform="translate(741.9 437.3) rotate(27.5) translate(0 131.0)" text-anchor="middle" font-size="13" font-style="italic">5</text><text transform="translate(741.9 437.3) rotate(21.0) translate(0 131.0)" text-anchor="middle" font-size="13" font-style="italic">1</text><text transform="translate(741.9 437.3) rotate(14.4) translate(0 131.0)" text-anchor="middle" font-size="13" font-style="italic">5</text><text transform="translate(741.9 437.3) rotate(7.9) translate(0 131.0)" text-anchor="middle" font-size="13" font-style="italic">y</text><text transform="translate(741.9 437.3) rotate(1.4) translate(0 131.0)" text-anchor="middle" font-size="13" font-style="italic">m</text><text transform="translate(741.9 437.3) rotate(-5.2) translate(0 131.0)" text-anchor="middle" font-size="13" font-style="italic">.</text><text transform="translate(741.9 437.3) rotate(-11.7) translate(0 131.0)" text-anchor="middle" font-size="13" font-style="italic">c</text><text transform="translate(741.9 437.3) rotate(-18.3) translate(0 131.0)" text-anchor="middle" font-size="13" font-style="italic">o</text><text transform="translate(741.9 437.3) rotate(-24.8) translate(0 131.0)" text-anchor="middle" font-size="13" font-style="italic">m</text><text x="667.5" y="450.5" font-size="38">515</text><text transform="translate(738.5 450.8) skewX(-9)" font-size="36" font-family="Noto Serif CJK SC,serif" font-weight="700" letter-spacing="2.500">源码</text><text transform="translate(674.30 517.2) scale(0.90 1)" text-anchor="middle" font-size="28.500" font-weight="bold">5</text><text transform="translate(691.40 517.2) scale(0.90 1)" text-anchor="middle" font-size="28.500" font-weight="bold">1</text><text transform="translate(708.50 517.2) scale(0.90 1)" text-anchor="middle" font-size="28.500" font-weight="bold">5</text><text transform="translate(725.60 517.2) scale(0.90 1)" text-anchor="middle" font-size="28.500" font-weight="bold">y</text><text transform="translate(742.70 517.2) scale(0.69 1)" text-anchor="middle" font-size="28.500" font-weight="bold">m</text><text transform="translate(757.30 517.2) scale(1.00 1)" text-anchor="middle" font-size="28.500" font-weight="bold">.</text><text transform="translate(776.90 517.2) scale(0.95 1)" text-anchor="middle" font-size="28.500" font-weight="bold">c</text><text transform="translate(794.00 517.2) scale(0.98 1)" text-anchor="middle" font-size="28.500" font-weight="bold">o</text><text transform="translate(811.10 517.2) scale(0.69 1)" text-anchor="middle" font-size="28.500" font-weight="bold">m</text>
</svg>
<div id="stripw"></div><div id="strip"></div>
</body>
</html>
